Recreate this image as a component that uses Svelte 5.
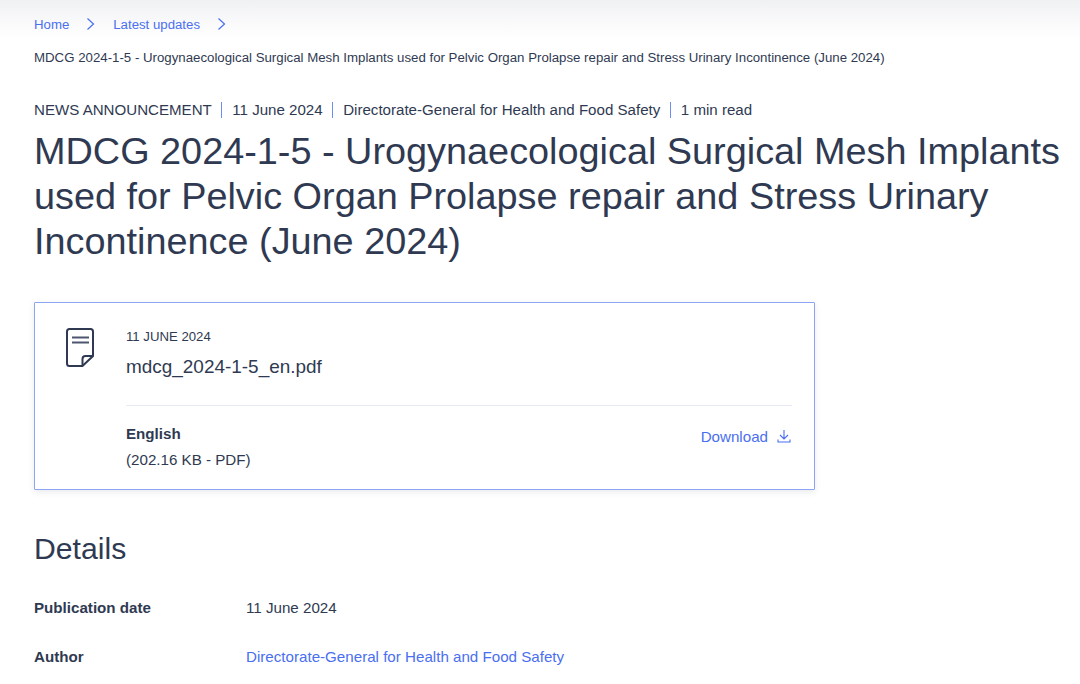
<script>
  const meta = ['NEWS ANNOUNCEMENT', '11 June 2024', 'Directorate-General for Health and Food Safety', '1 min read'];
</script>

<div class="page">
  <nav class="crumbs">
    <a href="#top">Home</a>
    <svg class="chev" width="9" height="14" viewBox="0 0 9 14"><path d="M1.5 1.5 7.5 7l-6 5.5" /></svg>
    <a href="#top">Latest updates</a>
    <svg class="chev" width="9" height="14" viewBox="0 0 9 14"><path d="M1.5 1.5 7.5 7l-6 5.5" /></svg>
  </nav>
  <p class="current">MDCG 2024-1-5 - Urogynaecological Surgical Mesh Implants used for Pelvic Organ Prolapse repair and Stress Urinary Incontinence (June 2024)</p>
  <ul class="meta">
    {#each meta as m}<li>{m}</li>{/each}
  </ul>
  <h1>MDCG 2024-1-5 - Urogynaecological Surgical Mesh Implants used for Pelvic Organ Prolapse repair and Stress Urinary Incontinence (June 2024)</h1>

  <section class="card">
    <svg class="doc" width="30" height="41" viewBox="0 0 30 41">
      <path class="line" d="M4.500 2h21a2.500 2.500 0 0 1 2.500 2.500V29L17.500 39h-13A2.500 2.500 0 0 1 2 36.500v-32A2.500 2.500 0 0 1 4.500 2Z" />
      <path class="line" d="M28 29h-7.500a3 3 0 0 0-3 3v7" />
      <path class="line thin" d="M7 10.500h17M7 15.500h17" />
    </svg>
    <div class="card-body">
      <div class="date">11 JUNE 2024</div>
      <div class="file">mdcg_2024-1-5_en.pdf</div>
      <hr />
      <div class="lang-row">
        <div>
          <div class="lang">English</div>
          <div class="size">(202.16 KB - PDF)</div>
        </div>
        <a class="dl" href="#top">Download
          <svg width="14" height="14" viewBox="0 0 14 14"><path d="M7 1v8.500M3 6l4 4 4-4M1 10.500V13h12v-2.500" /></svg>
        </a>
      </div>
    </div>
  </section>

  <h2>Details</h2>
  <dl>
    <dt>Publication date</dt><dd>11 June 2024</dd>
    <dt>Author</dt><dd><a href="#top">Directorate-General for Health and Food Safety</a></dd>
  </dl>
</div>

<style>
  :global(body) { background: #fff; overflow: hidden; }
  .page {
    height: 684px; box-sizing: border-box; overflow: hidden; padding: 0 0 0 34px;
    background: linear-gradient(#f0f1f3 0, #fbfbfc 26px, #fff 40px);
    font-family: "Liberation Sans", Arial, sans-serif; color: #2f3a52;
  }
  a { color: #4a6ff0; text-decoration: none; }
  .crumbs { display: flex; align-items: center; height: 16px; padding-top: 16px; font-size: 13.230px; }
  .chev { margin: 0 18px 0 17px; }
  .chev path { fill: none; stroke: #4a6ff0; stroke-width: 1.200; }
  .current { margin: 18px 0 0; font-size: 13.260px; line-height: 16px; }
  .meta { display: flex; list-style: none; margin: 34px 0 0; padding: 0; font-size: 15.100px; line-height: 20px; }
  .meta li + li { margin-left: 9.500px; padding-left: 10px; border-left: 1px solid #6f8cf2; line-height: 16px; margin-top: 2px; height: 16px; }
  h1 { margin: 9px 0 0; width: 1040px; font-size: 37.840px; line-height: 45px; font-weight: 400; }
  .card {
    display: flex; width: 781px; height: 188px; box-sizing: border-box; margin-top: 38px;
    border: 1px solid #8da4f5; box-shadow: 0 2px 6px rgba(38,50,75,.1); border-radius: 1px; padding: 24px 22px 0 30px; background: #fff;
  }
  .doc { flex: none; margin-right: 31px; }
  .line { fill: none; stroke: #2f3a52; stroke-width: 2; }
  .line.thin { stroke: #4d5770; }
  .card-body { flex: 1; }
  .date { font-size: 13.200px; line-height: 20px; }
  .file { font-size: 18.950px; line-height: 24px; margin-top: 8px; }
  hr { border: 0; border-top: 1px solid #e6eaf7; margin: 26px 0 16px; }
  .lang-row { display: flex; justify-content: space-between; }
  .lang { font-size: 15.150px; font-weight: 700; line-height: 24px; }
  .size { font-size: 15.150px; line-height: 20px; margin-top: 4px; }
  .dl { display: flex; align-items: center; gap: 9px; height: 24px; margin-top: 2px; font-size: 15.150px; margin-right: 1px; }
  .dl svg { fill: none; stroke: #4a6ff0; stroke-width: 1.100; }
  h2 { margin: 41px 0 0; font-size: 30.200px; line-height: 36px; font-weight: 400; }
  dl { display: grid; grid-template-columns: 212px 1fr; row-gap: 29px; margin: 31px 0 0; font-size: 15.150px; line-height: 20px; }
  dt { font-weight: 700; }
  dd { margin: 0; }
</style>
